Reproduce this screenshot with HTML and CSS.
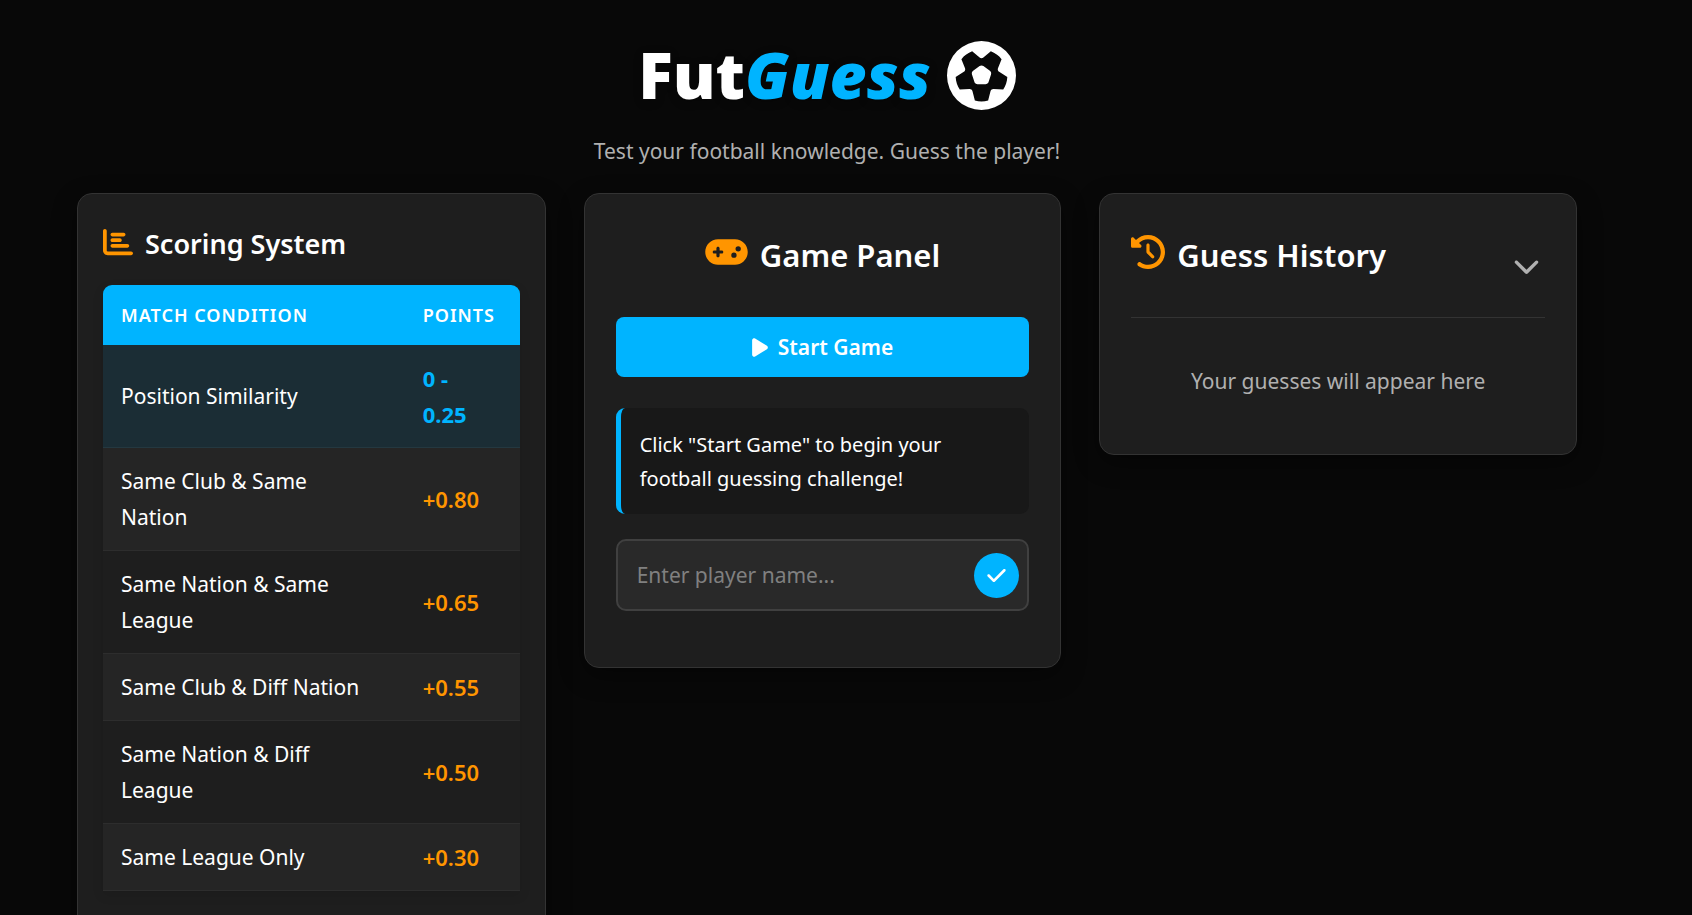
FILE: index.html
```html
<!DOCTYPE html>
<html lang="en">
<head>
  <meta charset="UTF-8" />
  <title>FutGuess</title>
  <meta name="viewport" content="width=device-width, initial-scale=1.0" />
  <link rel="stylesheet" href="styles.css">
</head>
<body>
  <header>
    <h1>
      <span>Fut<span class="accent">Guess</span></span>
      <svg class="logo" viewBox="0 0 512 512" aria-hidden="true"><path d="M417.3 360.1l-71.6-4.8c-5.2-.3-10.3 1.1-14.5 4.2s-7.2 7.4-8.4 12.5l-17.6 69.6C289.5 445.8 273 448 256 448s-33.5-2.2-49.2-6.4L189.2 372c-1.3-5-4.3-9.4-8.4-12.5s-9.3-4.5-14.5-4.2l-71.6 4.8c-17.6-27.2-28.5-59.2-30.4-93.6L125 228.3c4.4-2.8 7.6-7 9.2-11.9s1.4-10.2-.5-15l-26.7-66.6C128 109.2 155.3 89 186.7 76.9l55.2 46c4 3.3 9 5.1 14.1 5.1s10.2-1.8 14.1-5.1l55.2-46c31.3 12.1 58.7 32.3 79.6 57.9l-26.7 66.6c-1.9 4.8-2.1 10.1-.5 15s4.9 9.1 9.2 11.9l60.7 38.2c-1.9 34.4-12.8 66.4-30.4 93.6zM256 512A256 256 0 1 0 256 0a256 256 0 1 0 0 512zm14.1-325.7c-8.4-6.1-19.8-6.1-28.2 0L194 221c-8.4 6.1-11.9 16.9-8.7 26.8l18.3 56.3c3.2 9.9 12.4 16.6 22.8 16.6h59.2c10.4 0 19.6-6.7 22.8-16.6l18.3-56.3c3.2-9.9-.3-20.7-8.7-26.8l-47.9-34.8z"/></svg>
    </h1>
    <p>Test your football knowledge. Guess the player!</p>
  </header>

  <main class="container">
    <section class="card scoring">
      <h2>
        <svg class="icon" viewBox="0 0 512 512" aria-hidden="true"><path d="M32 32c17.7 0 32 14.3 32 32V400c0 8.8 7.2 16 16 16H480c17.7 0 32 14.3 32 32s-14.3 32-32 32H80c-44.2 0-80-35.8-80-80V64C0 46.3 14.3 32 32 32zm96 96c0-17.7 14.3-32 32-32l192 0c17.7 0 32 14.3 32 32s-14.3 32-32 32l-192 0c-17.7 0-32-14.3-32-32zm32 64H288c17.7 0 32 14.3 32 32s-14.3 32-32 32H160c-17.7 0-32-14.3-32-32s14.3-32 32-32zm0 96H416c17.7 0 32 14.3 32 32s-14.3 32-32 32H160c-17.7 0-32-14.3-32-32s14.3-32 32-32z"/></svg>
        Scoring System
      </h2>
      <table>
        <thead>
          <tr><th>Match Condition</th><th>Points</th></tr>
        </thead>
        <tbody>
          <tr class="highlight"><td>Position Similarity</td><td>0 - 0.25</td></tr>
          <tr><td>Same Club &amp; Same Nation</td><td>+0.80</td></tr>
          <tr><td>Same Nation &amp; Same League</td><td>+0.65</td></tr>
          <tr><td>Same Club &amp; Diff Nation</td><td>+0.55</td></tr>
          <tr><td>Same Nation &amp; Diff League</td><td>+0.50</td></tr>
          <tr><td>Same League Only</td><td>+0.30</td></tr>
        </tbody>
      </table>
    </section>

    <section class="card game">
      <h2>
        <svg class="icon wide" viewBox="0 0 640 512" aria-hidden="true"><path d="M192 64C86 64 0 150 0 256S86 448 192 448H448c106 0 192-86 192-192s-86-192-192-192H192zM496 168a40 40 0 1 1 0 80 40 40 0 1 1 0-80zM392 304a40 40 0 1 1 80 0 40 40 0 1 1 -80 0zM168 200c0-13.3 10.7-24 24-24s24 10.7 24 24v32h32c13.3 0 24 10.7 24 24s-10.7 24-24 24H216v32c0 13.3-10.7 24-24 24s-24-10.7-24-24V280H136c-13.3 0-24-10.7-24-24s10.7-24 24-24h32V200z"/></svg>
        Game Panel
      </h2>
      <button class="start" type="button" onclick="startGame()">
        <svg viewBox="0 0 384 512" aria-hidden="true"><path d="M73 39c-14.8-9.1-33.4-9.4-48.5-.9S0 62.6 0 80V432c0 17.4 9.4 33.4 24.5 41.9s33.7 8.1 48.5-.9L361 297c14.3-8.7 23-24.2 23-41s-8.7-32.2-23-41L73 39z"/></svg>
        Start Game
      </button>
      <p class="message" id="message">Click "Start Game" to begin your football guessing challenge!</p>
      <form class="guess" onsubmit="return false">
        <input id="guessInput" type="text" placeholder="Enter player name..." aria-label="Player name" />
        <button type="submit" aria-label="Submit guess">
          <svg viewBox="0 0 448 512" aria-hidden="true"><path d="M438.6 105.4c12.5 12.5 12.5 32.8 0 45.3l-256 256c-12.5 12.5-32.8 12.5-45.3 0l-128-128c-12.5-12.5-12.5-32.8 0-45.3s32.8-12.5 45.3 0L160 338.7 393.4 105.4c12.5-12.5 32.8-12.5 45.3 0z"/></svg>
        </button>
      </form>
    </section>

    <section class="card history">
      <div class="history-head">
        <h2>
          <svg class="icon" viewBox="0 0 512 512" aria-hidden="true"><path d="M75 75L41 41C25.9 25.9 0 36.6 0 57.9V168c0 13.3 10.7 24 24 24H134.1c21.4 0 32.1-25.9 17-41l-30.8-30.8C155 85.5 203 64 256 64c106 0 192 86 192 192s-86 192-192 192c-40.8 0-78.6-12.7-109.7-34.4c-14.5-10.1-34.4-6.6-44.6 7.9s-6.6 34.4 7.9 44.6C151.2 495 201.7 512 256 512c141.4 0 256-114.6 256-256S397.4 0 256 0C185.3 0 121.3 28.7 75 75zm181 53c-13.3 0-24 10.7-24 24V256c0 6.4 2.5 12.5 7 17l72 72c9.4 9.4 24.6 9.4 33.9 0s9.4-24.6 0-33.9l-65-65V152c0-13.3-10.7-24-24-24z"/></svg>
          Guess History
        </h2>
        <button type="button" aria-label="Toggle history" onclick="toggleHistory()">
          <svg viewBox="0 0 512 512" aria-hidden="true"><path d="M233.4 406.6c12.5 12.5 32.8 12.5 45.3 0l192-192c12.5-12.5 12.5-32.8 0-45.3s-32.8-12.5-45.3 0L256 338.7 86.6 169.4c-12.5-12.5-32.8-12.5-45.3 0s-12.5 32.8 0 45.3l192 192z"/></svg>
        </button>
      </div>
      <p id="historyList">Your guesses will appear here</p>
    </section>
  </main>

  <script>
    function startGame() {
      guessInput.value = "";
      guessInput.focus();
    }

    function toggleHistory() {
      historyList.hidden = !historyList.hidden;
    }
  </script>
</body>
</html>
```
FILE: styles.css
```css
* { box-sizing: border-box; margin: 0; padding: 0; }
body { background: #080808; color: #fff; font-family: "Segoe UI", "Noto Sans", sans-serif; font-size: 21px; line-height: 36px; padding: 38px 115px 0 77px; overflow: hidden; }
svg { fill: currentColor; flex: none; }
button, input { font: inherit; color: inherit; border: none; }
button { cursor: pointer; }

header { text-align: center; margin-bottom: 24px; }
h1 { display: flex; justify-content: center; align-items: center; gap: 16px; font-size: 64px; font-weight: 900; line-height: 74px; text-shadow: 0 2px 10px rgba(0,0,0,0.3); }
.accent { color: #00b4ff; font-style: italic; }
.logo { width: 69px; height: 69px; }
header p { color: #b0b0b0; margin-top: 21px; }

.container { display: grid; grid-template-columns: 469fr 478fr 478fr; gap: 38px; align-items: start; }
.card { background: #1e1e1e; border: 1px solid #333; border-radius: 15px; padding: 31px; box-shadow: 0 8px 24px rgba(0,0,0,0.4); }
h2 { display: flex; align-items: center; gap: 12px; font-size: 31px; font-weight: 600; line-height: 60px; }
.icon { width: 34px; height: 34px; color: #ff9500; margin-bottom: 6px; }
.icon.wide { width: 43px; }

.scoring { padding: 25px; min-height: 760px; }
.scoring h2 { font-size: 27px; line-height: 50px; margin-bottom: 16px; }
.scoring .icon { width: 30px; height: 30px; margin-bottom: 4px; }
table { width: 100%; border-collapse: collapse; border-radius: 9px 9px 0 0; overflow: hidden; box-shadow: 0 4px 12px rgba(0,0,0,0.1); }
th { background: #00b4ff; font-size: 18px; font-weight: 600; letter-spacing: 1px; text-transform: uppercase; text-align: left; height: 60px; padding: 0 18px; }
td { padding: 15px 40px 15px 18px; border-bottom: 1px solid #2d2d2d; }
th:last-child, td:last-child { width: 115px; }
td:last-child { color: #ff9500; font-size: 22px; font-weight: 600; padding-right: 36px; }
tbody tr:nth-child(even) { background: #252525; }
tbody tr.highlight { background: #1b2d35; }
.highlight td { border-color: #243840; }
tbody .highlight td:last-child { color: #00b4ff; font-weight: 700; }

.game { padding-bottom: 56px; }
.game h2 { justify-content: center; margin-bottom: 32px; }
.start { display: flex; justify-content: center; align-items: center; gap: 10px; width: 100%; height: 60px; background: #00b4ff; border-radius: 8px; font-weight: 600; }
.start svg { width: 16px; height: 21px; }
.message { background: #181818; border-left: 5px solid #00b4ff; border-radius: 9px; padding: 20px 19px 18px; margin: 31px 0 25px; font-size: 20px; line-height: 34px; }
.guess { display: flex; align-items: center; background: #292929; border: 2px solid #404040; border-radius: 10px; padding: 0 8px 0 19px; height: 72px; }
.guess input { flex: 1; min-width: 0; background: none; outline: none; }
.guess input::placeholder { color: #808080; }
.guess button { display: flex; justify-content: center; align-items: center; width: 45px; height: 45px; background: #00b4ff; border-radius: 50%; }
.guess svg { width: 19px; height: 21px; }

.history-head { display: flex; justify-content: space-between; align-items: flex-start; height: 93px; border-bottom: 1px solid #333; }
.history-head button { display: flex; background: none; color: #b0b0b0; padding: 5px; margin-top: 22px; }
.history-head button svg { width: 27px; height: 27px; }
.history p { color: #b0b0b0; text-align: center; padding: 45px 0 24px; }

@media (max-width: 1100px) {
  body { padding: 20px; overflow: auto; }
  .container { grid-template-columns: 1fr; }
}
```
